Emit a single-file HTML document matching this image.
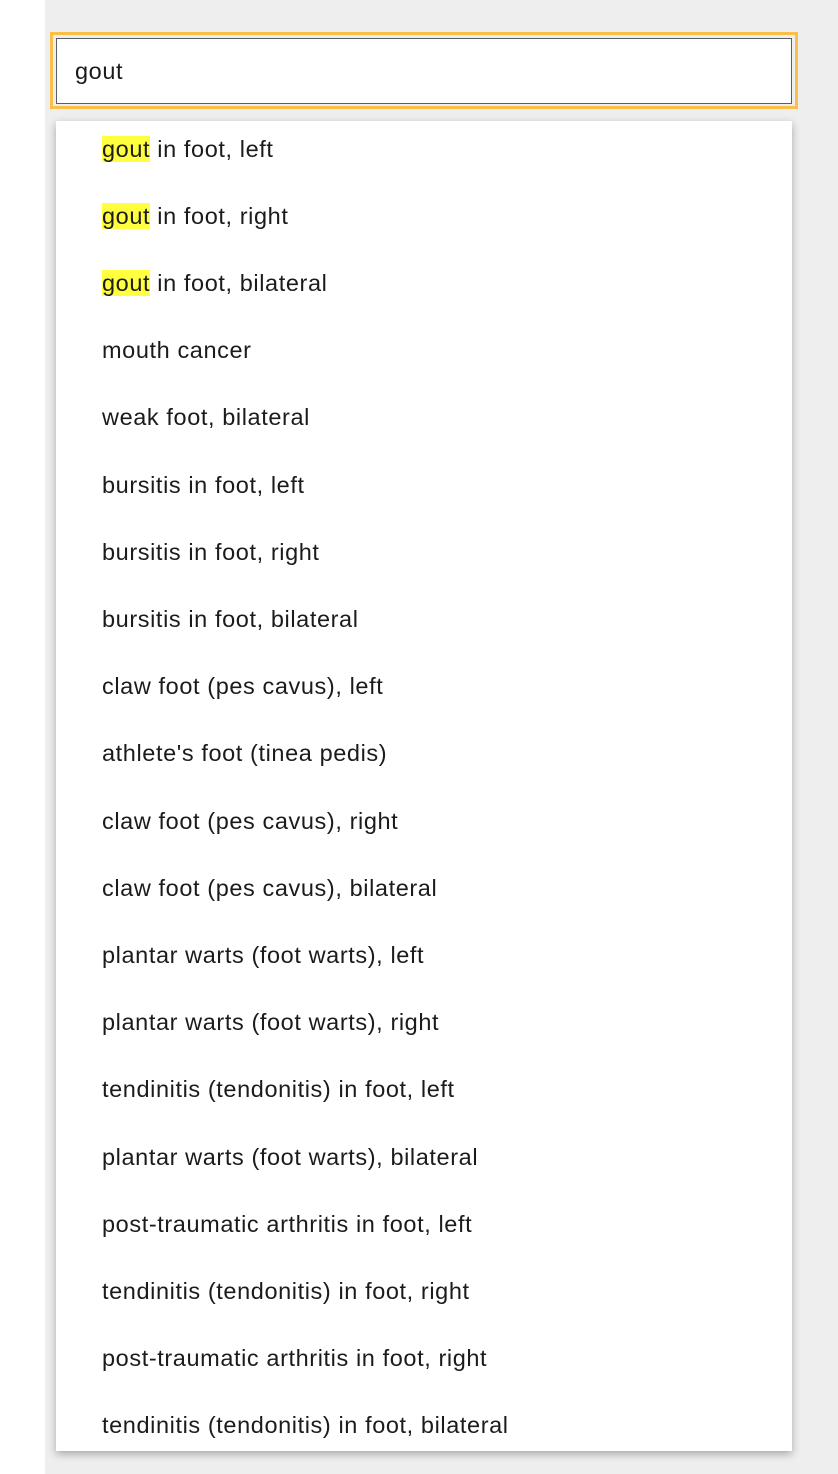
<!DOCTYPE html>
<html><head><style>
body{margin:0;width:838px;height:1474px;background:#fff;font-family:"Liberation Sans",sans-serif;position:relative;overflow:hidden}
#bg{position:absolute;left:45px;top:0;width:793px;height:1474px;background:#eeeeee}
#ring{position:absolute;left:50px;top:32px;width:742px;height:71px;border:3px solid #f9bf47;}
#inp{position:absolute;left:56px;top:38px;border:1px solid #5a5d63;background:#fff;font-size:23.5px;letter-spacing:0.6px;color:#1b1b1b;line-height:64px;padding-left:18px;box-sizing:border-box;width:736px;height:66px}
#dd{position:absolute;left:56px;top:121px;width:736px;height:1330px;background:#fff;box-shadow:0 3px 8px rgba(0,0,0,.3)}
.it{position:absolute;left:46px;font-size:23.5px;letter-spacing:0.6px;color:#1b1b1b;line-height:30px;white-space:nowrap}
mark{background:#ffff40;color:#1b1b1b}
</style></head><body>
<div id="bg"></div>
<div id="ring"></div>
<div id="inp">gout</div>
<div id="dd">
<div class="it" style="top:13px"><mark>gout</mark> in foot, left</div>
<div class="it" style="top:80px"><mark>gout</mark> in foot, right</div>
<div class="it" style="top:147px"><mark>gout</mark> in foot, bilateral</div>
<div class="it" style="top:214px">mouth cancer</div>
<div class="it" style="top:281px">weak foot, bilateral</div>
<div class="it" style="top:349px">bursitis in foot, left</div>
<div class="it" style="top:416px">bursitis in foot, right</div>
<div class="it" style="top:483px">bursitis in foot, bilateral</div>
<div class="it" style="top:550px">claw foot (pes cavus), left</div>
<div class="it" style="top:617px">athlete's foot (tinea pedis)</div>
<div class="it" style="top:685px">claw foot (pes cavus), right</div>
<div class="it" style="top:752px">claw foot (pes cavus), bilateral</div>
<div class="it" style="top:819px">plantar warts (foot warts), left</div>
<div class="it" style="top:886px">plantar warts (foot warts), right</div>
<div class="it" style="top:953px">tendinitis (tendonitis) in foot, left</div>
<div class="it" style="top:1021px">plantar warts (foot warts), bilateral</div>
<div class="it" style="top:1088px">post-traumatic arthritis in foot, left</div>
<div class="it" style="top:1155px">tendinitis (tendonitis) in foot, right</div>
<div class="it" style="top:1222px">post-traumatic arthritis in foot, right</div>
<div class="it" style="top:1289px">tendinitis (tendonitis) in foot, bilateral</div>
</div>
</body></html>
